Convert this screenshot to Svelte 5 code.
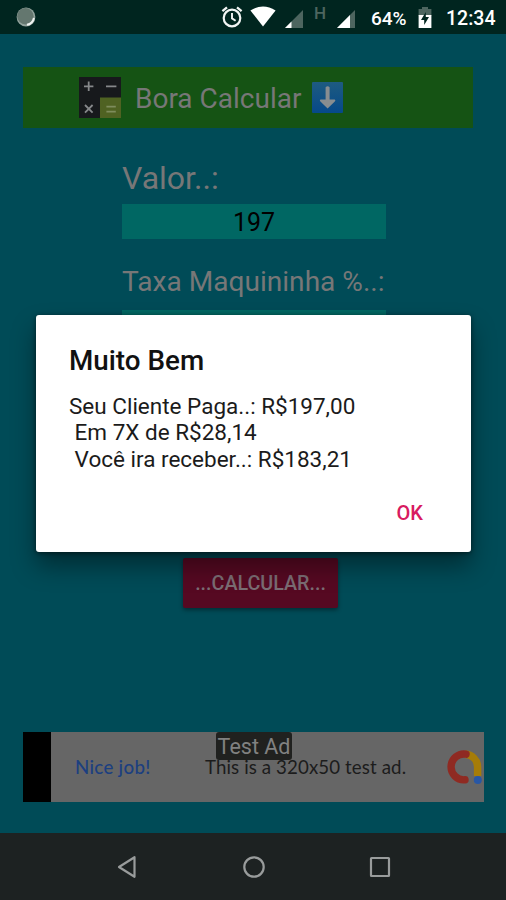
<script>
  const lines = ['Seu Cliente Paga..: R$197,00', ' Em 7X de R$28,14', ' Você ira receber..: R$183,21'];
</script>

<div class="screen">
  <header class="status">
    <svg class="sync" width="22" height="22" viewBox="0 0 22 22">
      <circle cx="11" cy="11" r="9.4" fill="#93a49e" />
      <circle cx="10.4" cy="10.2" r="8.2" fill="#64776f" />
      <path d="M12 18.8A8.6 8.6 0 0 0 18.9 12" fill="none" stroke="#eef2f0" stroke-width="2" />
    </svg>
    <svg class="alarm" width="22" height="22" viewBox="0 0 22 22" fill="none" stroke="#f2f5f4">
      <circle cx="11" cy="12" r="8.3" stroke-width="2.2" />
      <path d="M11 7v5.4l3.6 2.3" stroke-width="1.9" />
      <path d="M1.4 5.2L6 1.4M20.6 5.2L16 1.4" stroke-width="2.3" />
    </svg>
    <svg class="wifi" width="26" height="21" viewBox="0 0 26 21">
      <path d="M.4 4.6Q13-3.8 25.6 4.6L13 20.4z" fill="#fff" />
    </svg>
    <svg class="sig1" width="18" height="18" viewBox="0 0 18 18">
      <path d="M0 18L18 0v18z" fill="#4d655f" /><path d="M0 18l6.5-6.5V18z" fill="#fff" />
    </svg>
    <span class="net">H</span>
    <svg class="sig2" width="18" height="18" viewBox="0 0 18 18">
      <path d="M0 18L18 0v18z" fill="#4d655f" /><path d="M0 18L13 5v13z" fill="#fff" />
    </svg>
    <span class="pct">64%</span>
    <svg class="batt" width="14" height="21" viewBox="0 0 14 21">
      <path d="M4 0h6v2h3.4v7H.6V2H4z" fill="#4d655f" />
      <path d="M.6 8h12.8v13H.6z" fill="#fff" />
      <path d="M7.8 5L3 13h3.2v5L11 10H7.8z" fill="#00251f" />
    </svg>
    <span class="time">12:34</span>
  </header>

  <main>
    <section class="banner">
      <svg class="calc" width="42" height="41" viewBox="0 0 42 41">
        <path d="M0 0h42v41H0z" fill="#17191c" />
        <path d="M21 20.5h21V41H21z" fill="#4f6222" />
        <g stroke="#86888a" stroke-width="1.8" fill="none">
          <path d="M5 9.3h9.4M9.7 4.6V14M27 9.3h10.4M6 28l7.6 7.6M13.6 28L6 35.6" />
          <path d="M27.4 29.6h9.4M27.4 34.6h9.4" stroke="#7e8c5c" />
        </g>
      </svg>
      <span class="bora">Bora Calcular</span>
      <svg class="down" width="31" height="31" viewBox="0 0 31 31">
        <defs><linearGradient id="blue" x2="0" y2="1"><stop stop-color="#1e5b80" /><stop offset="1" stop-color="#06498a" /></linearGradient></defs>
        <rect width="31" height="31" rx="1" fill="url(#blue)" />
        <path d="M13.6 5.2q2-2 4 0v12.4h5.2q1.2.8 0 2L15.6 26.4 8.4 19.6q-1.2-1.2 0-2h5.2z" fill="#888d90" />
      </svg>
    </section>

    <section class="form">
      <div class="label valor">Valor..:</div>
      <div class="field">197</div>
      <div class="label taxa">Taxa Maquininha %..:</div>
      <div class="field"></div>
    </section>

    <div class="calcular"><span>...CALCULAR...</span></div>

    <section class="ad">
      <div class="black"></div>
      <span class="nice">Nice job!</span>
      <span class="desc">This is a 320x50 test ad.</span>
      <svg class="admob" width="36" height="36" viewBox="0 0 36 36" fill="none" stroke-width="7.4" stroke-linecap="round">
        <path d="M18 5.2A12.8 12.8 0 0 1 30.6 18v9" stroke="#a67c08" stroke-linecap="butt" />
        <path d="M19 5.2A12.9 12.9 0 1 0 18 30.8" stroke="#8f2a22" />
        <circle cx="30.8" cy="31" r="4" fill="#2857a5" stroke="none" />
      </svg>
      <span class="tag">Test Ad</span>
    </section>
  </main>

  <nav>
    <svg width="20" height="24" viewBox="0 0 20 24"><path d="M17.5 2.2v19.6L2 12z" /></svg>
    <svg width="24" height="24" viewBox="0 0 24 24"><circle cx="12" cy="12" r="9.7" /></svg>
    <svg width="22" height="24" viewBox="0 0 22 24"><rect x="2" y="3" width="18" height="18" rx=".5" /></svg>
  </nav>

  <div class="dialog">
    <h1>Muito Bem</h1>
    <div class="body">
      {#each lines as line}<div>{line}</div>{/each}
    </div>
    <div class="actions"><span>OK</span></div>
  </div>
</div>

<style>
  .screen {
    position: relative;
    display: flex;
    flex-direction: column;
    width: 506px;
    height: 900px;
    overflow: hidden;
    background: #004b57;
    font-family: Roboto, sans-serif;
  }
  span, .label { white-space: nowrap; }
  svg { display: block; flex: none; }
  .status {
    display: flex;
    align-items: flex-start;
    height: 34px;
    background: #00251f;
    color: #fff;
    font-weight: 500;
  }
  .sync { margin: 6px 0 0 15px; }
  .alarm { margin: 6px 0 0 184px; }
  .wifi { margin: 6px 0 0 7px; }
  .sig1 { margin: 10px 0 0 9px; }
  .net { width: 12px; margin: 3px 0 0 11px; font-size: 17px; line-height: 20px; color: #4d655f; }
  .sig2 { margin: 10px 0 0 11px; }
  .pct { width: 38px; margin: 7px 0 0 16px; font-size: 19px; line-height: 23px; }
  .batt { margin: 7px 0 0 9px; }
  .time { margin: 7px 0 0 14px; font-size: 19.5px; line-height: 23px; }
  main { display: flex; flex-direction: column; height: 799px; }
  .banner {
    display: flex;
    align-items: center;
    width: 450px;
    height: 61px;
    margin: 33px 0 0 23px;
    background: #155314;
  }
  .calc { margin-left: 56px; }
  .bora { width: 167px; margin-left: 14px; padding-top: 1px; font-size: 28px; color: #777; }
  .down { margin-left: 10px; }
  .form { display: flex; flex-direction: column; width: 264px; height: 389px; margin: 29px 0 0 122px; }
  .label { color: #777; }
  .valor { height: 47px; font-size: 32px; line-height: 43px; }
  .taxa { height: 71.5px; font-size: 28.1px; line-height: 85px; }
  .field { height: 34.5px; background: #006763; color: #000; font-size: 25px; line-height: 38px; text-align: center; flex: none; }
  .calcular {
    display: flex;
    align-items: center;
    justify-content: center;
    width: 155px;
    height: 50px;
    margin: 12px 0 0 183px;
    border-radius: 2px;
    background: #560922;
    box-shadow: 0 2px 4px #0006;
    color: #7b6d74;
    font-size: 19.7px;
    font-weight: 500;
  }
  .ad {
    position: relative;
    display: flex;
    align-items: center;
    width: 461px;
    height: 70px;
    margin: 124px 0 0 23px;
    background: #666;
    overflow: hidden;
    font-family: Lato, sans-serif;
    font-size: 18.7px;
    letter-spacing: .1px;
    flex: none;
  }
  .black { width: 28px; height: 70px; background: #000; }
  .nice { width: 77px; margin-left: 24px; color: #1c3f80; font-weight: 500; letter-spacing: .3px; }
  .desc { width: 203px; margin-left: 53px; color: #1c1c1c; }
  .admob { margin-left: 39px; }
  .tag {
    position: absolute;
    left: 193px;
    top: 0;
    width: 76px;
    height: 28px;
    border-radius: 3px;
    background: #20211f;
    color: #818181;
    font: 21.5px/30px Roboto, sans-serif;
    letter-spacing: 0;
    text-align: center;
  }
  nav { display: flex; height: 67px; background: #1d2222; }
  nav svg { margin-top: 22px; fill: none; stroke: #999c9c; stroke-width: 2.2; stroke-linejoin: round; }
  nav svg:nth-child(1) { margin-left: 117px; }
  nav svg:nth-child(2) { margin-left: 105px; }
  nav svg:nth-child(3) { margin-left: 103px; }
  .dialog {
    position: absolute;
    left: 36px;
    top: 315px;
    width: 435px;
    height: 237px;
    border-radius: 3px;
    background: #fff;
    box-shadow: 0 14px 24px #0006, 0 1px 5px #0008;
    color: #111;
    display: flex;
    flex-direction: column;
  }
  h1 { margin: 29px 0 0 33px; font-size: 27.8px; line-height: 34px; font-weight: 500; }
  .body { margin: 14.5px 0 0 33px; font-size: 22.5px; line-height: 26.6px; color: #1b1b1b; }
  .body div { white-space: pre; }
  .actions { display: flex; justify-content: flex-end; margin: 29px 48px 0 0; color: #d81b60; font-size: 20px; line-height: 24px; font-weight: 500; }
</style>
